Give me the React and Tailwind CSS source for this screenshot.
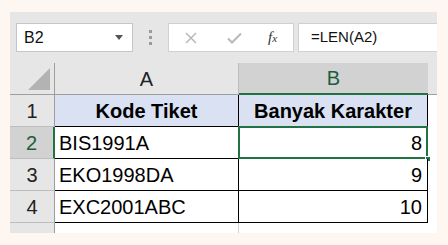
import React from "react";

const font = { fontFamily: '"Liberation Sans", Arial, sans-serif' };

function RowHeader({ n, selected }) {
  return (
    <div
      className={
        "w-[45px] shrink-0 flex items-center justify-center text-[20px] border-b border-[#bdbdbd] " +
        (selected
          ? "bg-[#d2d2d2] text-[#1b5e3b] border-r-2 border-r-[#217346]"
          : "bg-[#e6e6e6] text-[#222] border-r border-r-[#9e9e9e]")
      }
    >
      {n}
    </div>
  );
}

export default function App() {
  const rows = [
    { n: 2, a: "BIS1991A", b: "8", sel: true },
    { n: 3, a: "EKO1998DA", b: "9" },
    { n: 4, a: "EXC2001ABC", b: "10" },
  ];
  return (
    <div className="w-[448px] h-[245px] bg-[#fdf6f1] pt-[12px] pl-[10px]" style={font}>
      <div className="w-[427px] h-[221px] bg-[#e6e6e6] overflow-hidden flex flex-col">
        {/* formula bar */}
        <div className="flex items-center h-[29px] mt-[11px] pl-[6px]">
          <div className="w-[117px] h-[29px] bg-white border border-[#c6c6c6] flex items-center pl-[7px] pr-[9px] text-[16px] text-[#111]">
            <span className="flex-1">B2</span>
            <svg width="8" height="5" viewBox="0 0 8 5"><path d="M0 0h8L4 5z" fill="#555" /></svg>
          </div>
          <div className="w-[35px] flex flex-col items-center gap-[3px]">
            <div className="w-[3px] h-[3px] bg-[#9a9a9a]" />
            <div className="w-[3px] h-[3px] bg-[#9a9a9a]" />
            <div className="w-[3px] h-[3px] bg-[#9a9a9a]" />
          </div>
          <div className="w-[126px] h-[29px] bg-white border border-[#d0d0d0] flex items-center">
            <svg className="ml-[16px]" width="12" height="12" viewBox="0 0 12 12">
              <path d="M1 1L11 11M11 1L1 11" stroke="#b8b8b8" strokeWidth="1.5" />
            </svg>
            <svg className="ml-[30px]" width="15" height="12" viewBox="0 0 15 12">
              <path d="M1 6.5L5 10.5L14 1.5" stroke="#b8b8b8" strokeWidth="2" fill="none" />
            </svg>
            <span className="ml-[26px] text-[15px] italic text-[#333]" style={{ fontFamily: '"Liberation Serif", serif' }}>
              f<span className="text-[11px]">x</span>
            </span>
          </div>
          <div className="ml-[4px] flex-1 h-[29px] bg-white border border-[#d0d0d0] border-r-0 flex items-center pl-[12px] text-[15px] text-[#111]">
            =LEN(A2)
          </div>
        </div>

        {/* grid */}
        <div className="mt-[11px] flex flex-col">
          {/* column header */}
          <div className="flex h-[32px]">
            <div className="w-[45px] shrink-0 bg-[#e6e6e6] border-r border-[#9e9e9e] border-b border-b-[#9e9e9e] flex items-end justify-end pr-[4px] pb-[4px]">
              <svg width="22" height="22" viewBox="0 0 22 22"><path d="M22 0V22H0z" fill="#b3b3b3" /></svg>
            </div>
            <div className="w-[184px] shrink-0 bg-[#e6e6e6] border-r border-[#bdbdbd] border-b border-b-[#9e9e9e] flex items-center justify-center text-[20px] text-[#222]">
              A
            </div>
            <div className="w-[189px] shrink-0 bg-[#d2d2d2] border-b-2 border-[#217346] flex items-center justify-center text-[20px] text-[#1b5e3b]">
              B
            </div>
            <div className="flex-1 bg-[#e6e6e6] border-b border-[#9e9e9e]" />
          </div>
          {/* row 1 */}
          <div className="flex h-[32px]">
            <RowHeader n={1} />
            <div className="w-[184px] shrink-0 bg-[#d9e1f2] border-r border-b border-black flex items-center justify-center text-[20px] font-bold text-black">
              Kode Tiket
            </div>
            <div className="w-[189px] shrink-0 bg-[#d9e1f2] border-r border-b border-black flex items-center justify-center text-[20px] font-bold text-black">
              Banyak Karakter
            </div>
            <div className="flex-1 bg-white" />
          </div>
          {rows.map((r) => (
            <div key={r.n} className="flex h-[32px]">
              <RowHeader n={r.n} selected={r.sel} />
              <div className="w-[184px] shrink-0 bg-white border-r border-b border-black flex items-center pl-[4px] text-[20px] text-black">
                {r.a}
              </div>
              <div className="relative w-[189px] shrink-0 bg-white border-r border-b border-black flex items-center justify-end pr-[5px] text-[20px] text-black">
                {r.b}
                {r.sel && (
                  <>
                    <div className="absolute -left-[1px] -top-[1px] -right-[1px] -bottom-[1px] border-2 border-[#217346]" />
                    <div className="absolute -right-[4px] -bottom-[4px] w-[6px] h-[6px] bg-[#217346] border border-white" />
                  </>
                )}
              </div>
              <div className="flex-1 bg-white" />
            </div>
          ))}
          <div className="flex h-[12px]">
            <div className="w-[45px] shrink-0 bg-[#e6e6e6] border-r border-[#9e9e9e]" />
            <div className="w-[184px] shrink-0 bg-white border-r border-[#d4d4d4]" />
            <div className="w-[189px] shrink-0 bg-white" />
            <div className="flex-1 bg-white" />
          </div>
        </div>
      </div>
    </div>
  );
}
